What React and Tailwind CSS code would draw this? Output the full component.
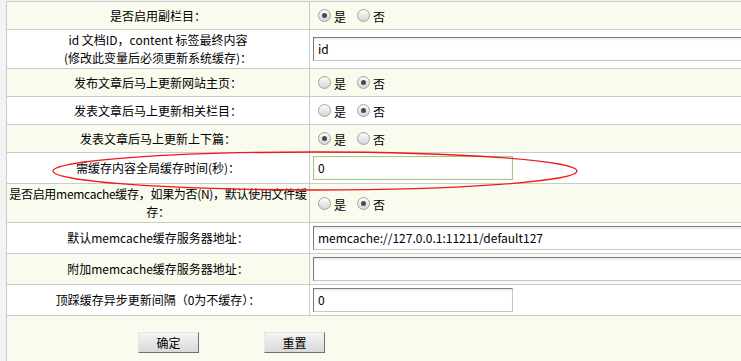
import React from "react";

const FONT = { fontFamily: '"Noto Sans CJK SC", "Liberation Sans", sans-serif' };

const rows = [
  { label: "是否启用副栏目：", type: "radio", value: "yes", h: "h-[28px]", bg: "bg-[#f9fbee]" },
  {
    label: (
      <>
        id 文档ID，content 标签最终内容
        <br />
        (修改此变量后必须更新系统缓存)：
      </>
    ),
    type: "input",
    value: "id",
    wide: true,
    h: "h-[39px]",
    bg: "bg-white",
  },
  { label: "发布文章后马上更新网站主页：", type: "radio", value: "no", h: "h-[28px]", bg: "bg-[#f9fbee]" },
  { label: "发表文章后马上更新相关栏目：", type: "radio", value: "no", h: "h-[28px]", bg: "bg-white" },
  { label: "发表文章后马上更新上下篇：", type: "radio", value: "yes", h: "h-[28px]", bg: "bg-[#f9fbee]" },
  { label: "需缓存内容全局缓存时间(秒)：", type: "input", value: "0", focus: true, h: "h-[31px]", bg: "bg-white" },
  {
    label: (
      <span className="tracking-[-0.3px]">
        是否启用memcache缓存，如果为否(N)，默认使用文件缓
        <br />
        存：
      </span>
    ),
    type: "radio",
    value: "no",
    h: "h-[39px]",
    bg: "bg-[#f9fbee]",
  },
  {
    label: "默认memcache缓存服务器地址：",
    type: "input",
    value: "memcache://127.0.0.1:11211/default127",
    wide: true,
    h: "h-[31px]",
    bg: "bg-white",
  },
  { label: "附加memcache缓存服务器地址：", type: "input", value: "", wide: true, h: "h-[31px]", bg: "bg-[#f9fbee]" },
  { label: "顶踩缓存异步更新间隔（0为不缓存）：", type: "input", value: "0", h: "h-[31px]", bg: "bg-white" },
];

function Radio({ checked }) {
  return (
    <span className="w-[13px] h-[13px] rounded-full border border-[#a3a3a3] bg-gradient-to-b from-[#fdfdfd] to-[#d6d6d6] flex items-center justify-center shrink-0">
      {checked && <span className="w-[5px] h-[5px] rounded-full bg-[#4a4a4a]" />}
    </span>
  );
}

function RadioGroup({ value }) {
  return (
    <div className="flex items-center pl-[8px]">
      <Radio checked={value === "yes"} />
      <span className="ml-[3px] mt-[3px]">是</span>
      <span className="ml-[11px]">
        <Radio checked={value === "no"} />
      </span>
      <span className="ml-[3px] mt-[3px]">否</span>
    </div>
  );
}

function TextBox({ value, wide, focus }) {
  const border = focus
    ? "border border-[#a9c97a] shadow-[inset_0_0_2px_#d9e8c0]"
    : "border border-t-[#7b7b7b] border-l-[#7b7b7b] border-b-[#c6c6c6] border-r-[#c6c6c6] shadow-[inset_0_2px_2px_#eeeeee]";
  return (
    <div className={`ml-[3px] h-[24px] bg-white flex items-center pl-[4px] shrink-0 ${wide ? "w-[520px]" : "w-[200px]"} ${border}`}>
      {value}
    </div>
  );
}

function Button({ children }) {
  return (
    <div className="w-[61px] h-[21px] flex items-center justify-center border border-t-[#e6e6e6] border-l-[#e6e6e6] border-b-[#6f6f6f] border-r-[#6f6f6f] bg-gradient-to-b from-[#f4f4f4] to-[#d9d9d9] text-[12px]">
      {children}
    </div>
  );
}

export default function App() {
  return (
    <div className="relative w-[741px] h-[361px] overflow-hidden bg-[#f3f3f3] pl-[6px] pt-[1px] text-[12px] text-black" style={FONT}>
      <div className="border-l border-t border-[#cbcbcb] h-full">
        {rows.map((row, i) => (
          <div key={i} className={`grid grid-cols-[303px_1fr] border-b border-[#cbcbcb] ${row.h} ${row.bg}`}>
            <div className="border-r border-[#cbcbcb] flex items-center justify-center text-center leading-[18px] whitespace-nowrap">
              <div>{row.label}</div>
            </div>
            <div className="flex items-center overflow-hidden">
              {row.type === "radio" ? (
                <RadioGroup value={row.value} />
              ) : (
                <TextBox value={row.value} wide={row.wide} focus={row.focus} />
              )}
            </div>
          </div>
        ))}
        <div className="bg-[#f9fbee] h-full flex pl-[131px] pt-[16px] gap-[65px]">
          <Button>确定</Button>
          <Button>重置</Button>
        </div>
      </div>

      {/* red annotation circle */}
      <svg className="absolute inset-0 pointer-events-none" width="741" height="361">
        <ellipse cx="315" cy="171" rx="262" ry="19" fill="none" stroke="#f01818" strokeWidth="1.3" />
      </svg>
    </div>
  );
}
